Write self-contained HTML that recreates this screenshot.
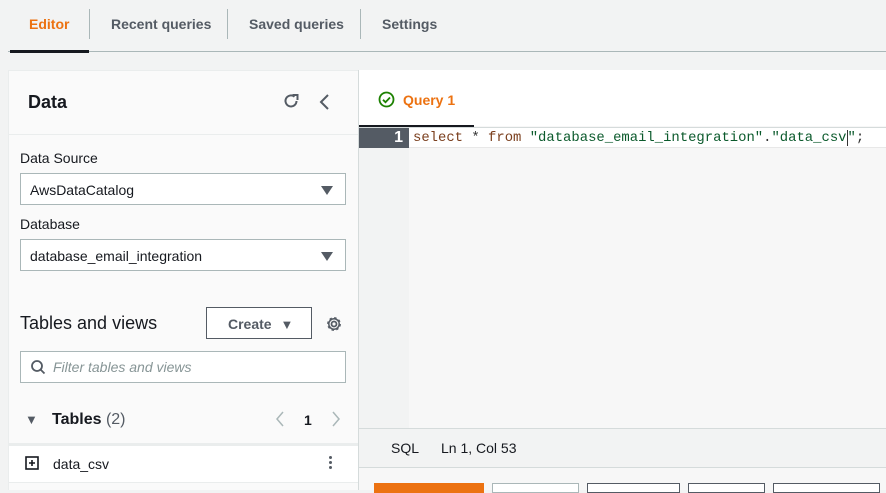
<!DOCTYPE html>
<html><head><style>
*{box-sizing:border-box;margin:0;padding:0}
body{width:886px;height:490px;overflow:hidden;background:#f2f3f3;font-family:"Liberation Sans",sans-serif;color:#16191f;position:relative}
.a{position:absolute}
.tab{position:absolute;top:16px;font-size:14px;font-weight:bold;color:#545b64}
.sep{position:absolute;top:9px;width:1px;height:30px;background:#aab7b8}
.sel{position:absolute;left:20px;width:326px;height:32px;border:1px solid #aab7b8;background:#fff;font-size:14px;padding:8px 0 0 9px}
.sel:after{content:"";position:absolute;right:12px;top:12px;border-left:6px solid transparent;border-right:6px solid transparent;border-top:9px solid #545b64}
.lbl{position:absolute;left:20px;font-size:14px}
</style></head><body>
<div class="tab" style="left:29px;color:#ec7211">Editor</div>
<div class="sep" style="left:89px"></div>
<div class="tab" style="left:111px">Recent queries</div>
<div class="sep" style="left:227px"></div>
<div class="tab" style="left:249px">Saved queries</div>
<div class="sep" style="left:360px"></div>
<div class="tab" style="left:382px">Settings</div>
<div class="a" style="left:8px;top:51px;width:878px;height:1px;background:#aab7b8"></div>
<div class="a" style="left:10px;top:50px;width:79px;height:3px;background:#16191f"></div>

<div class="a" style="left:8px;top:70px;width:350px;height:420px;background:#fafafa;border-left:1px solid #eaeded;border-top:1px solid #eaeded"></div>
<div class="a" style="left:8px;top:134px;width:350px;height:1px;background:#eaeded"></div>
<div class="a" style="left:28px;top:92px;font-size:18px;font-weight:bold">Data</div>
<svg class="a" style="left:282px;top:92px" width="18" height="18" viewBox="0 0 18 18"><path d="M14.5 9a5.5 5.5 0 1 1-2-4.3" fill="none" stroke="#545b64" stroke-width="2"/><path d="M10.5 3h5v5" fill="none" stroke="#545b64" stroke-width="2"/></svg>
<svg class="a" style="left:318px;top:93px" width="14" height="18" viewBox="0 0 14 18"><path d="M10 2L3 9l7 7" fill="none" stroke="#545b64" stroke-width="2"/></svg>
<div class="lbl" style="top:150px">Data Source</div>
<div class="sel" style="top:173px">AwsDataCatalog</div>
<div class="lbl" style="top:216px">Database</div>
<div class="sel" style="top:239px">database_email_integration</div>
<div class="a" style="left:20px;top:313px;font-size:18px">Tables and views</div>
<div class="a" style="left:206px;top:307px;width:106px;height:32px;border:1px solid #545b64;background:#fff;font-size:14px;font-weight:bold;color:#545b64;padding:8px 0 0 21px">Create <span style="font-size:13px;margin-left:5px">▼</span></div>
<svg class="a" style="left:325px;top:315px" width="18" height="18" viewBox="0 0 18 18"><circle cx="9" cy="9" r="2.5" fill="none" stroke="#545b64" stroke-width="1.8"/><circle cx="9" cy="9" r="6" fill="none" stroke="#545b64" stroke-width="1.8" stroke-dasharray="2.4 2.3"/><circle cx="9" cy="9" r="5.2" fill="none" stroke="#545b64" stroke-width="1.5"/></svg>
<div class="a" style="left:20px;top:351px;width:326px;height:32px;border:1px solid #aab7b8;background:#fff"></div>
<svg class="a" style="left:30px;top:359px" width="16" height="16" viewBox="0 0 16 16"><circle cx="7" cy="7" r="5" fill="none" stroke="#545b64" stroke-width="1.8"/><path d="M10.5 10.5l4 4" stroke="#545b64" stroke-width="1.8"/></svg>
<div class="a" style="left:53px;top:359px;font-size:14px;font-style:italic;color:#879596">Filter tables and views</div>
<div class="a" style="left:25px;top:412px;font-size:13px;color:#545b64">▼</div>
<div class="a" style="left:52px;top:411px;font-size:16px;font-weight:bold">Tables <span style="font-weight:normal;color:#545b64">(2)</span></div>
<svg class="a" style="left:274px;top:410px" width="12" height="18" viewBox="0 0 12 18"><path d="M9 2L3 9l6 7" fill="none" stroke="#aab7b8" stroke-width="1.5"/></svg>
<div class="a" style="left:304px;top:412px;font-size:14px;font-weight:bold">1</div>
<svg class="a" style="left:330px;top:410px" width="12" height="18" viewBox="0 0 12 18"><path d="M3 2l6 7-6 7" fill="none" stroke="#aab7b8" stroke-width="1.5"/></svg>
<div class="a" style="left:8px;top:443px;width:350px;height:3px;background:#eaeded"></div>
<div class="a" style="left:9px;top:446px;width:349px;height:36px;background:#fff"></div>
<div class="a" style="left:8px;top:482px;width:350px;height:1px;background:#eaeded"></div>
<svg class="a" style="left:25px;top:456px" width="14" height="14" viewBox="0 0 14 14"><rect x="1" y="1" width="12" height="12" fill="none" stroke="#16191f" stroke-width="1.6"/><path d="M7 4v6M4 7h6" stroke="#16191f" stroke-width="1.6"/></svg>
<div class="a" style="left:53px;top:456px;font-size:14px">data_csv</div>
<div class="a" style="left:329px;top:456px;width:3px;height:3px;border-radius:2px;background:#545b64;box-shadow:0 5px 0 #545b64,0 10px 0 #545b64"></div>

<div class="a" style="left:358px;top:70px;width:528px;height:420px;background:#f7f7f7;border-left:1px solid #d5dbdb"></div>
<div class="a" style="left:359px;top:70px;width:527px;height:56px;background:#fff"></div>
<svg class="a" style="left:378px;top:91px" width="17" height="17" viewBox="0 0 17 17"><circle cx="8.5" cy="8.5" r="7" fill="none" stroke="#1d8102" stroke-width="1.8"/><path d="M5 8.8l2.5 2.4 4.5-4.7" fill="none" stroke="#1d8102" stroke-width="1.8"/></svg>
<div class="a" style="left:403px;top:92px;font-size:14px;font-weight:bold;color:#ec7211">Query 1</div>
<div class="a" style="left:359px;top:125px;width:115px;height:2px;background:#16191f"></div>
<div class="a" style="left:359px;top:127px;width:527px;height:1px;background:#d5dbdb"></div>
<div class="a" style="left:359px;top:128px;width:50px;height:300px;background:#f2f3f3"></div>
<div class="a" style="left:359px;top:128px;width:50px;height:20px;background:#545b64;color:#fff;font-family:'Liberation Sans',sans-serif;font-weight:bold;font-size:16px;text-align:right;padding:1px 6px 0 0">1</div>
<div class="a" style="left:409px;top:128px;width:477px;height:20px;background:#fff;border-bottom:1px solid #e8e8e8"></div>
<div class="a" style="left:413px;top:130px;font-family:'Liberation Mono',monospace;font-size:13.9px;white-space:pre;color:#333"><span style="color:#7a3e1d">select</span> * <span style="color:#7a3e1d">from</span> <span style="color:#0b5a2c">"database_email_integration"</span>.<span style="color:#0b5a2c">"data_csv</span><span style="border-left:1px solid #333"></span><span style="color:#0b5a2c">"</span>;</div>
<div class="a" style="left:359px;top:428px;width:527px;height:40px;background:#f2f3f3;border-top:1px solid #d5dbdb;border-bottom:1px solid #d5dbdb"></div>
<div class="a" style="left:391px;top:440px;font-size:14px">SQL</div>
<div class="a" style="left:441px;top:440px;font-size:14px">Ln 1, Col 53</div>
<div class="a" style="left:374px;top:483px;width:110px;height:10px;background:#ec7211"></div>
<div class="a" style="left:492px;top:483px;width:87px;height:10px;border:1px solid #aab7b8;background:#fff"></div>
<div class="a" style="left:587px;top:483px;width:93px;height:10px;border:1px solid #545b64;background:#fff"></div>
<div class="a" style="left:688px;top:483px;width:77px;height:10px;border:1px solid #545b64;background:#fff"></div>
<div class="a" style="left:773px;top:483px;width:107px;height:10px;border:1px solid #545b64;background:#fff"></div>
</body></html>
